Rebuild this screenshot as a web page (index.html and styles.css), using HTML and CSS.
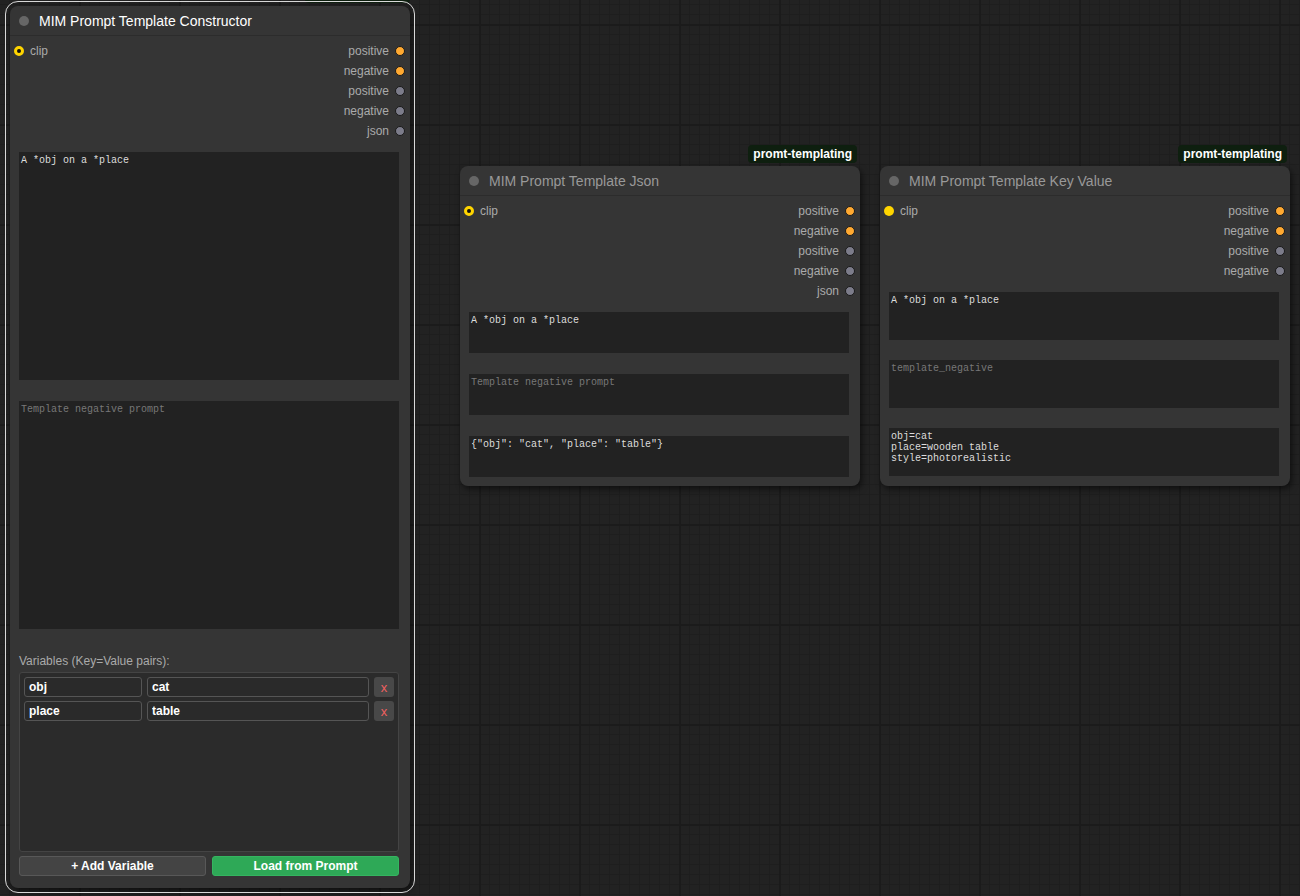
FILE: index.html
```html
<!DOCTYPE html>
<html lang="en">
<head>
  <meta charset="UTF-8" />
  <meta name="viewport" content="width=device-width, initial-scale=1.0"/>
  <title>MIM Prompt Template</title>
  <link rel="stylesheet" href="styles.css">
</head>
<body>

  <div class="canvas">

    <!-- node 1: constructor (selected) -->
    <div class="node node-constructor selected">
      <div class="badge-strip"></div>
      <div class="node-title"><span class="title-dot"></span>MIM Prompt Template Constructor</div>
      <div class="slots">
        <div class="inputs">
          <div class="slot"><span class="dot dot-clip"></span>clip</div>
        </div>
        <div class="outputs">
          <div class="slot">positive<span class="dot dot-cond"></span></div>
          <div class="slot">negative<span class="dot dot-cond"></span></div>
          <div class="slot">positive<span class="dot dot-str"></span></div>
          <div class="slot">negative<span class="dot dot-str"></span></div>
          <div class="slot">json<span class="dot dot-str"></span></div>
        </div>
      </div>
      <div class="widgets">
        <textarea class="prompt big" spellcheck="false">A *obj on a *place</textarea>
        <textarea class="prompt big" spellcheck="false" placeholder="Template negative prompt"></textarea>

        <div class="vars-label">Variables (Key=Value pairs):</div>
        <div class="vars-box">
          <div class="var-row">
            <input class="var-key" value="obj">
            <input class="var-val" value="cat">
            <button class="var-del">x</button>
          </div>
          <div class="var-row">
            <input class="var-key" value="place">
            <input class="var-val" value="table">
            <button class="var-del">x</button>
          </div>
        </div>
        <div class="var-buttons">
          <button class="btn btn-add">+ Add Variable</button>
          <button class="btn btn-load">Load from Prompt</button>
        </div>
      </div>
    </div>

    <!-- node 2: json -->
    <div class="node node-json">
      <div class="badge">promt-templating</div>
      <div class="node-title"><span class="title-dot"></span>MIM Prompt Template Json</div>
      <div class="slots">
        <div class="inputs">
          <div class="slot"><span class="dot dot-clip"></span>clip</div>
        </div>
        <div class="outputs">
          <div class="slot">positive<span class="dot dot-cond"></span></div>
          <div class="slot">negative<span class="dot dot-cond"></span></div>
          <div class="slot">positive<span class="dot dot-str"></span></div>
          <div class="slot">negative<span class="dot dot-str"></span></div>
          <div class="slot">json<span class="dot dot-str"></span></div>
        </div>
      </div>
      <div class="widgets">
        <textarea class="prompt small" spellcheck="false">A *obj on a *place</textarea>
        <textarea class="prompt small" spellcheck="false" placeholder="Template negative prompt"></textarea>
        <textarea class="prompt small" spellcheck="false">{"obj": "cat", "place": "table"}</textarea>
      </div>
    </div>

    <!-- node 3: key value -->
    <div class="node node-kv">
      <div class="badge">promt-templating</div>
      <div class="node-title"><span class="title-dot"></span>MIM Prompt Template Key Value</div>
      <div class="slots">
        <div class="inputs">
          <div class="slot"><span class="dot dot-clip filled"></span>clip</div>
        </div>
        <div class="outputs">
          <div class="slot">positive<span class="dot dot-cond"></span></div>
          <div class="slot">negative<span class="dot dot-cond"></span></div>
          <div class="slot">positive<span class="dot dot-str"></span></div>
          <div class="slot">negative<span class="dot dot-str"></span></div>
        </div>
      </div>
      <div class="widgets">
        <textarea class="prompt mid" spellcheck="false">A *obj on a *place</textarea>
        <textarea class="prompt mid" spellcheck="false" placeholder="template_negative"></textarea>
        <textarea class="prompt mid" spellcheck="false">obj=cat
place=wooden table
style=photorealistic</textarea>
      </div>
    </div>

  </div>

</body>
</html>
```

FILE: styles.css
```css
* { box-sizing: border-box; margin: 0; padding: 0; }

body {
  width: 1300px;
  height: 896px;
  overflow: hidden;
  font-family: 'Liberation Sans', Arial, sans-serif;
  background-color: #222;
}

.canvas {
  position: relative;
  width: 1300px;
  height: 896px;
  background-color: #222;
  background-image:
    linear-gradient(#1b1b1b 2px, transparent 2px),
    linear-gradient(90deg, #1b1b1b 2px, transparent 2px),
    linear-gradient(#1e1e1e 1px, transparent 1px),
    linear-gradient(90deg, #1e1e1e 1px, transparent 1px);
  background-size: 100px 100px, 100px 100px, 10px 10px, 10px 10px;
  background-position: 79px 24px, 79px 24px, 9px 4px, 9px 4px;
}

/* nodes sit on a free canvas, so they get coordinates */
.node {
  position: absolute;
  background-color: #353535;
  border-radius: 8px;
  box-shadow: 2px 3px 6px rgba(0, 0, 0, 0.55);
  display: flex;
  flex-direction: column;
  overflow: visible;
}

.node > * { flex-shrink: 0; }

.node-constructor { left: 10px; top: 6px; width: 400px; height: 882px; }
.node-json { left: 460px; top: 166px; width: 400px; height: 320px; }
.node-kv { left: 880px; top: 166px; width: 410px; height: 320px; }

.selected::after {
  content: "";
  position: absolute;
  inset: -5px;
  border: 1.5px solid #d8d8d8;
  border-radius: 13px;
  pointer-events: none;
}

.badge {
  position: absolute;
  right: 3px;
  bottom: calc(100% + 3px);
  height: 18px;
  padding: 0 5px;
  line-height: 18px;
  background-color: #0e1f0f;
  color: #fff;
  font-size: 12px;
  font-weight: bold;
  border-radius: 4px;
  white-space: nowrap;
}

/* badge of the constructor node, scrolled above the view */
.badge-strip {
  position: absolute;
  right: 0;
  bottom: calc(100% + 3px);
  width: 105px;
  height: 18px;
  background-color: #0e1f0f;
  border-radius: 4px;
}

.node-title {
  height: 30px;
  display: flex;
  align-items: center;
  gap: 10px;
  padding-left: 9px;
  font-size: 14px;
  color: #999;
  border-bottom: 1px solid #2c2c2c;
}

.selected .node-title { color: #fff; }

.title-dot {
  width: 10px;
  height: 10px;
  border-radius: 50%;
  background-color: #666;
}

.slots {
  display: flex;
  justify-content: space-between;
  padding-top: 5px;
}

.slot {
  height: 20px;
  display: flex;
  align-items: center;
  font-size: 12px;
  color: #aaa;
}

.inputs .slot { gap: 6px; padding-left: 4px; }
.outputs .slot { gap: 6px; justify-content: flex-end; padding-right: 5px; }

.dot {
  width: 10px;
  height: 10px;
  border-radius: 50%;
  border: 1px solid #1a1a1a;
}

.dot-cond { background-color: #ffa931; }
.dot-str { background-color: #7c7c8a; }

.dot-clip {
  background-color: #111;
  border: 3px solid #ffd500;
}
.dot-clip.filled { background-color: #ffd500; border: none; }

.widgets {
  display: flex;
  flex-direction: column;
  padding: 11px 11px 10px 9px;
  gap: 21px;
}

.node-json .widgets { padding-bottom: 9px; }
.node-kv .widgets { gap: 20px; }

.prompt {
  display: block;
  width: 100%;
  resize: none;
  border: none;
  outline: none;
  overflow: hidden;
  background-color: #222;
  color: #ddd;
  font-family: 'Liberation Mono', 'Courier New', monospace;
  font-size: 10px;
  line-height: 11px;
  padding: 3px 2px 2px;
}

.prompt::placeholder { color: #777; }

.prompt.big { height: 228px; }
.prompt.small { height: 41px; }
.prompt.mid { height: 48px; }

.vars-label {
  margin-top: 4px;
  margin-bottom: -17px;
  font-size: 12px;
  color: #aaa;
}

.vars-box {
  height: 180px;
  border: 1px solid #444;
  border-radius: 3px;
  background-color: #2b2b2b;
  padding: 4px;
  display: flex;
  flex-direction: column;
  gap: 4px;
}

.var-row {
  display: flex;
  gap: 5px;
}

.var-row input {
  height: 20px;
  background-color: #2a2a2a;
  border: 1px solid #555;
  border-radius: 3px;
  color: #fff;
  font-family: inherit;
  font-size: 12px;
  font-weight: bold;
  padding: 0 4px;
  outline: none;
}

.var-key { width: 118px; }
.var-val { width: 224px; }

.var-del {
  width: 20px;
  height: 20px;
  border: none;
  border-radius: 3px;
  background-color: #484848;
  color: #f06060;
  font-family: inherit;
  font-size: 13px;
}

.var-buttons {
  display: flex;
  gap: 6px;
  margin-top: -17px;
}

.btn {
  flex: 1;
  height: 20px;
  border-radius: 3px;
  color: #fff;
  font-family: inherit;
  font-size: 12px;
  font-weight: bold;
  cursor: pointer;
}

.btn-add {
  background-color: #444;
  border: 1px solid #585858;
}

.btn-load {
  background-color: #2ea957;
  border: 1px solid #35b560;
}
```
